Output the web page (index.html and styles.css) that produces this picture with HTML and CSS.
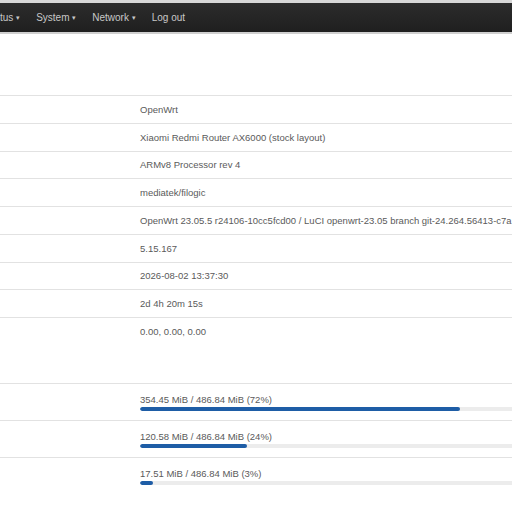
FILE: index.html
```html
<!DOCTYPE html>
<html>
<head>
<meta charset="utf-8">
<link rel="stylesheet" href="styles.css">
</head>
<body>
<div class="page">
  <header class="navbar">
    <nav class="menu">
      <span class="item item-cut">tus <span class="caret">&#9662;</span></span>
      <span class="item">System <span class="caret">&#9662;</span></span>
      <span class="item">Network <span class="caret">&#9662;</span></span>
      <span class="item">Log out</span>
    </nav>
  </header>
  <main class="content">
    <section class="table sys">
      <div class="row"><div class="label"></div><div class="value">OpenWrt</div></div>
      <div class="row"><div class="label"></div><div class="value">Xiaomi Redmi Router AX6000 (stock layout)</div></div>
      <div class="row"><div class="label"></div><div class="value">ARMv8 Processor rev 4</div></div>
      <div class="row"><div class="label"></div><div class="value">mediatek/filogic</div></div>
      <div class="row"><div class="label"></div><div class="value">OpenWrt 23.05.5 r24106-10cc5fcd00 / LuCI openwrt-23.05 branch git-24.264.56413-c7a</div></div>
      <div class="row"><div class="label"></div><div class="value">5.15.167</div></div>
      <div class="row"><div class="label"></div><div class="value">2026-08-02 13:37:30</div></div>
      <div class="row"><div class="label"></div><div class="value">2d 4h 20m 15s</div></div>
      <div class="row last"><div class="label"></div><div class="value">0.00, 0.00, 0.00</div></div>
    </section>
    <section class="table mem">
      <div class="row"><div class="label"></div><div class="value"><div class="ptext">354.45 MiB / 486.84 MiB (72%)</div><div class="track"><div class="fill" style="width:72%"></div></div></div></div>
      <div class="row"><div class="label"></div><div class="value"><div class="ptext">120.58 MiB / 486.84 MiB (24%)</div><div class="track"><div class="fill" style="width:24%"></div></div></div></div>
      <div class="row last"><div class="label"></div><div class="value"><div class="ptext">17.51 MiB / 486.84 MiB (3%)</div><div class="track"><div class="fill" style="width:3%"></div></div></div></div>
    </section>
  </main>
</div>
</body>
</html>
```
FILE: styles.css
```css
html, body {
  margin: 0;
  padding: 0;
  background: #fff;
}
.page {
  width: 512px;
  height: 512px;
  overflow: hidden;
  font-family: "Liberation Sans", Arial, sans-serif;
  font-size: 9.5px;
  color: #5a5a5a;
  border-top: 3px solid #d8d8d8;
  box-sizing: border-box;
}
.navbar {
  height: 29px;
  background: linear-gradient(#2c2c2c, #1f1f1f);
  border-bottom: 2px solid #cfcfcf;
  display: flex;
  align-items: center;
}
.menu {
  display: flex;
  align-items: center;
  gap: 16px;
  margin-left: 0;
  color: #c8c8c8;
  font-size: 10px;
}
.caret {
  font-size: 7px;
  vertical-align: 1px;
}
.content {
  padding-top: 61px;
  width: 600px;
}
.table {
  display: flex;
  flex-direction: column;
}
.row {
  display: grid;
  grid-template-columns: 140px 1fr;
  border-top: 1px solid #e2e2e2;
}
.sys .row {
  height: 26.75px;
  align-items: center;
}
.value {
  white-space: nowrap;
}
.mem {
  margin-top: 38px;
}
.mem .row {
  height: 36px;
  align-content: center;
}
.mem .value {
  padding-top: 2px;
}
.ptext {
  line-height: 11px;
}
.track {
  width: 445px;
  height: 4px;
  margin-top: 2px;
  background: #ececec;
  border-radius: 2px;
  overflow: hidden;
}
.fill {
  height: 100%;
  background: #1e5da6;
  border-radius: 2px;
}
```
